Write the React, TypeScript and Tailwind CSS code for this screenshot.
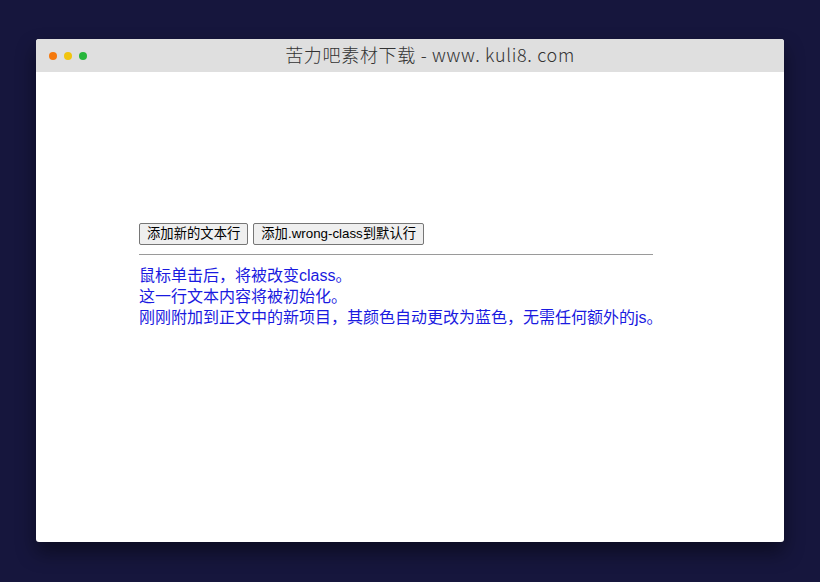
export default function App() {
  const lines = [
    '鼠标单击后，将被改变class。',
    '这一行文本内容将被初始化。',
    '刚刚附加到正文中的新项目，其颜色自动更改为蓝色，无需任何额外的js。',
  ];
  return (
    <div className="min-h-[582px] w-full bg-[#16163d] pt-[39px] pl-[36px] font-['Liberation_Sans','Noto_Sans_CJK_SC',sans-serif]">
      <div className="w-[748px] h-[503px] bg-white rounded-[3px] overflow-hidden shadow-[0_10px_20px_rgba(0,0,0,0.45)] flex flex-col">
        <div className="relative h-[33px] bg-[#dfdfdf] flex items-center justify-center shrink-0">
          <div className="absolute left-[13px] top-[13px] flex gap-[7px]">
            <span className="w-[8px] h-[8px] rounded-full bg-[#f5790d]" />
            <span className="w-[8px] h-[8px] rounded-full bg-[#f1c40f]" />
            <span className="w-[8px] h-[8px] rounded-full bg-[#27b63b]" />
          </div>
          <div className="pl-[40px] -mt-[3px] text-[18px] text-[#333] font-light tracking-[0.7px] font-['Noto_Sans_CJK_SC',sans-serif] whitespace-pre">苦力吧素材下载 - www. kuli8. com</div>
        </div>
        <div className="pl-[103px] pt-[151px]">
          <div className="flex gap-[5px]">
            <button className="h-[22px] px-[7px] text-[13.33px] text-black bg-[#efefef] border border-[#767676] rounded-[2px] leading-none">添加新的文本行</button>
            <button className="h-[22px] px-[7px] text-[13.33px] text-black bg-[#efefef] border border-[#767676] rounded-[2px] leading-none">添加.wrong-class到默认行</button>
          </div>
          <div className="w-[514px] mt-[9px] border-t border-[#9a9a9a]" />
          <div className="mt-[10px] text-[16px] leading-[21px] text-[#1a1ae0]">
            {lines.map((l) => (
              <div key={l}>{l}</div>
            ))}
          </div>
        </div>
      </div>
    </div>
  );
}
